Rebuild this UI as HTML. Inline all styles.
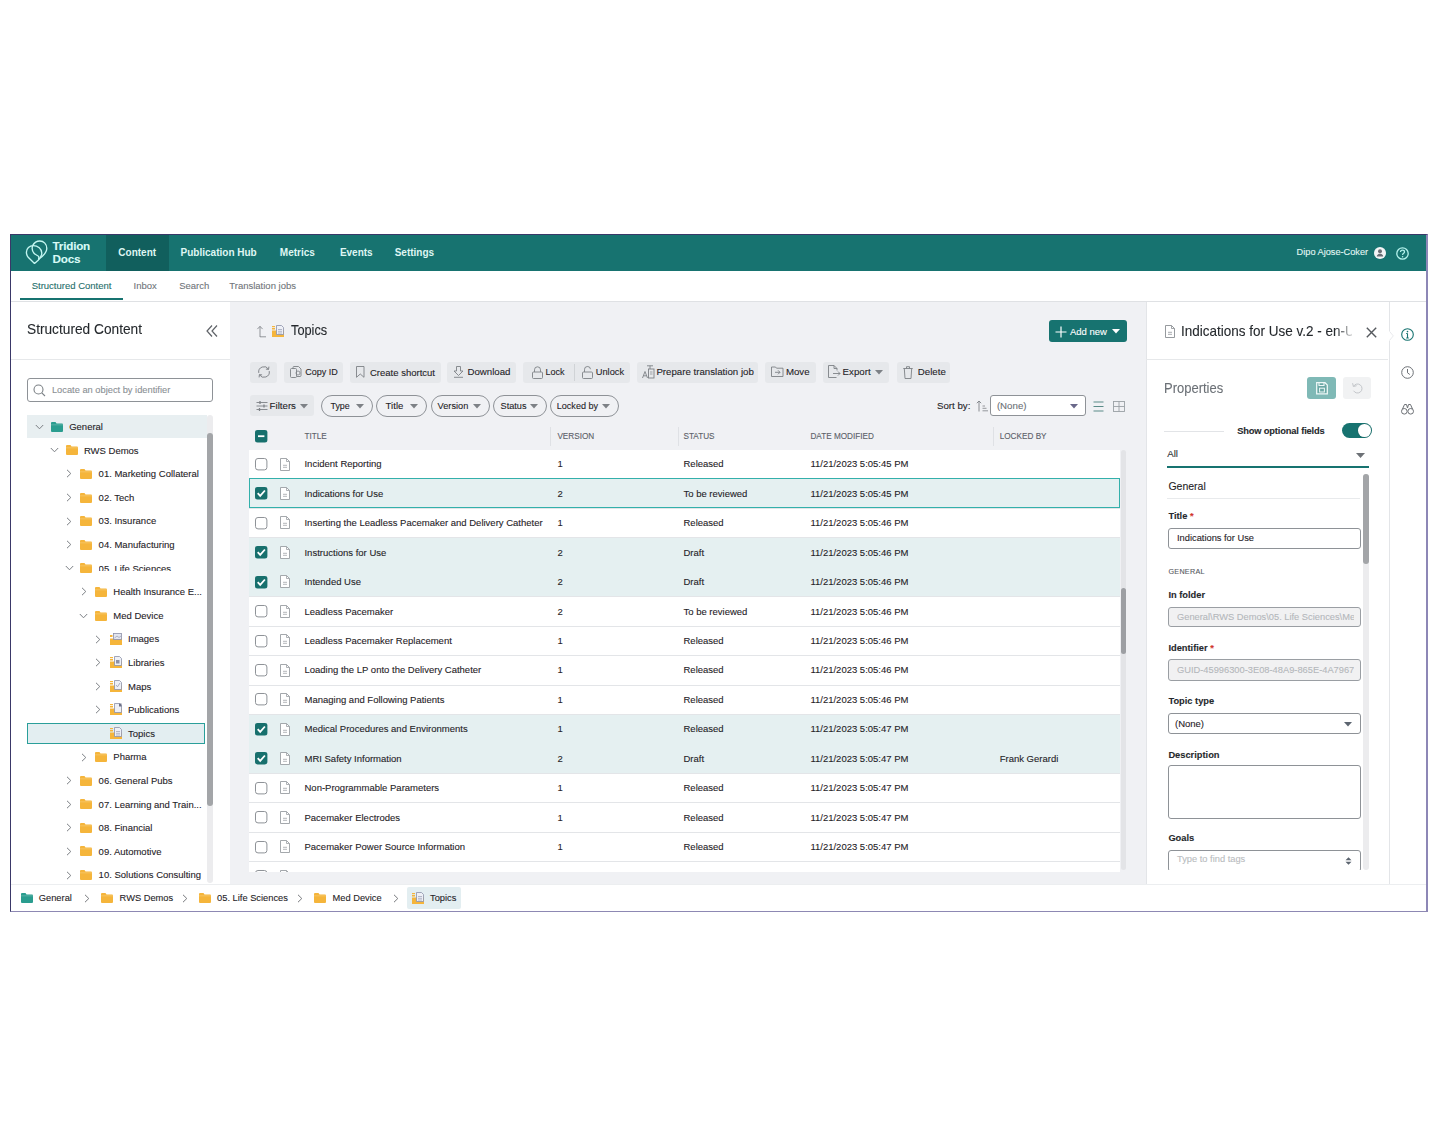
<!DOCTYPE html>
<html><head><meta charset="utf-8"><title>Tridion Docs</title>
<style>
html,body{margin:0;padding:0;background:#fff;}
body{width:1438px;height:1146px;position:relative;overflow:hidden;font-family:"Liberation Sans", sans-serif;}
.t{position:absolute;white-space:nowrap;font-family:"Liberation Sans", sans-serif;-webkit-text-stroke:0.1px currentColor;}
.nav{-webkit-text-stroke:0.35px currentColor;}
svg{display:block;overflow:visible}
</style></head><body>
<div style="position:absolute;left:10.00px;top:234.00px;width:1418.00px;height:677.50px;background:#fff"></div><div style="position:absolute;left:10.50px;top:234.50px;width:1417.00px;height:36.00px;background:#177370"></div><div style="position:absolute;left:106.00px;top:234.50px;width:63.00px;height:36.00px;background:#115f5d"></div><svg style="position:absolute;left:24.00px;top:238.00px;" width="26" height="28" viewBox="0 0 26 28"><g fill="none" stroke="#c4f6f1" stroke-width="1.35" stroke-linejoin="round">
<path d="M8.6 7.6 C10.2 4.6 12.8 3 15.8 3 C19.8 3 22.8 6.3 22.8 10.3 C22.8 14.5 18.5 18.6 14.6 21.2"/>
<path d="M10.5 25.4 L4.2 19.2 C2.8 17.6 2.4 15.8 2.4 14.2 C2.4 10.3 5.5 7.6 9.3 7.6 C13.8 7.6 17.8 10.8 17.8 15 C17.8 18.6 16.2 20.2 14.2 22.2 Z"/>
<path d="M8.6 7.8 C7.8 10.4 8.2 13.2 10 15.2 C11.5 16.8 13.6 17.4 14.6 18.4 C15 19.2 14.8 20.6 14.5 21.6"/>
</g></svg><div class="t" style="left:52.50px;top:239.18px;font-size:11.7px;line-height:14.04px;color:#d9fbf7;font-weight:700;letter-spacing:-0.2px">Tridion</div><div class="t" style="left:52.50px;top:251.78px;font-size:11.7px;line-height:14.04px;color:#d9fbf7;font-weight:700;letter-spacing:-0.2px">Docs</div><div class="t" style="left:118.30px;top:246.60px;font-size:10px;line-height:12.00px;color:#dff6f3;font-weight:700;-webkit-text-stroke:0px">Content</div><div class="t" style="left:180.60px;top:246.60px;font-size:10px;line-height:12.00px;color:#dff6f3;font-weight:700;-webkit-text-stroke:0px">Publication Hub</div><div class="t" style="left:279.80px;top:246.60px;font-size:10px;line-height:12.00px;color:#dff6f3;font-weight:700;-webkit-text-stroke:0px">Metrics</div><div class="t" style="left:339.90px;top:246.60px;font-size:10px;line-height:12.00px;color:#dff6f3;font-weight:700;-webkit-text-stroke:0px">Events</div><div class="t" style="left:394.70px;top:246.60px;font-size:10px;line-height:12.00px;color:#dff6f3;font-weight:700;-webkit-text-stroke:0px">Settings</div><div class="t" style="left:1296.60px;top:247.48px;font-size:9.2px;line-height:11.04px;color:#e4f7f5;font-weight:400;">Dipo Ajose-Coker</div><svg style="position:absolute;left:1373.50px;top:247.00px;" width="12" height="12" viewBox="0 0 12 12"><circle cx="6" cy="6" r="6" fill="#f4f4f6"/><circle cx="6" cy="4.3" r="2" fill="#6b6e75"/><path d="M2.8 9.6 C3 7.4 4.5 6.8 6 6.8 C7.5 6.8 9 7.4 9.2 9.6 Z" fill="#6b6e75"/></svg><svg style="position:absolute;left:1396.20px;top:246.60px;" width="13" height="13" viewBox="0 0 13 13"><circle cx="6.5" cy="6.5" r="5.7" fill="none" stroke="#b3f1eb" stroke-width="1.3"/><path d="M4.5 5.1 C4.5 3.8 5.4 3.1 6.5 3.1 C7.7 3.1 8.5 3.9 8.5 4.9 C8.5 6.3 6.6 6.3 6.6 7.9" fill="none" stroke="#b3f1eb" stroke-width="1.25"/><circle cx="6.6" cy="9.8" r="0.8" fill="#b3f1eb"/></svg><div style="position:absolute;left:10.50px;top:270.50px;width:1417.00px;height:31.00px;background:#fff"></div><div style="position:absolute;left:10.50px;top:301.00px;width:1417.00px;height:1.00px;background:#dfe1e4"></div><div style="position:absolute;left:20.00px;top:297.60px;width:102.50px;height:2.60px;background:#177370"></div><div class="t" style="left:31.70px;top:280.10px;font-size:9.5px;line-height:11.40px;color:#1f6f6b;font-weight:400;">Structured Content</div><div class="t" style="left:133.50px;top:280.10px;font-size:9.5px;line-height:11.40px;color:#70757a;font-weight:400;">Inbox</div><div class="t" style="left:179.20px;top:280.10px;font-size:9.5px;line-height:11.40px;color:#70757a;font-weight:400;">Search</div><div class="t" style="left:229.30px;top:280.10px;font-size:9.5px;line-height:11.40px;color:#70757a;font-weight:400;">Translation jobs</div><div style="position:absolute;left:10.50px;top:302.00px;width:219.50px;height:582.00px;background:#fff"></div><div class="t" style="left:26.80px;top:321.26px;font-size:14.9px;line-height:17.88px;color:#25292d;font-weight:400;transform:scaleX(0.92);transform-origin:0 50%;">Structured Content</div><svg style="position:absolute;left:205.00px;top:324.00px;" width="14" height="14" viewBox="0 0 14 14"><path d="M7 1.5 L2 7 L7 12.5 M12 1.5 L7 7 L12 12.5" fill="none" stroke="#5f6368" stroke-width="1.2"/></svg><div style="position:absolute;left:10.50px;top:359.00px;width:219.50px;height:1.00px;background:#e6e8ea"></div><div style="position:absolute;left:26.50px;top:378.40px;width:186.50px;height:24.00px;box-sizing:border-box;border:1px solid #8e9297;border-radius:3px;background:#fff"></div><svg style="position:absolute;left:32.50px;top:384.00px;" width="13" height="13" viewBox="0 0 13 13"><circle cx="5.5" cy="5.5" r="4.5" fill="none" stroke="#7b8085" stroke-width="1.1"/><path d="M8.8 8.8 L12 12" stroke="#7b8085" stroke-width="1.1"/></svg><div class="t" style="left:51.90px;top:384.82px;font-size:9.3px;line-height:11.16px;color:#8a8f94;font-weight:400;">Locate an object by identifier</div><div style="position:absolute;left:26.50px;top:415.20px;width:180.00px;height:22.60px;background:#e8eff1"></div><div style="position:absolute;left:27.20px;top:722.90px;width:177.80px;height:21.40px;box-sizing:border-box;border:1.5px solid #2a9f9a;background:#e3eef1"></div><svg style="position:absolute;left:35.20px;top:423.80px;" width="9" height="6" viewBox="0 0 9 6"><path d="M0.8 1 L4.5 4.8 L8.2 1" fill="none" stroke="#7b7f84" stroke-width="1"/></svg><svg style="position:absolute;left:51.00px;top:421.80px;" width="12" height="10" viewBox="0 0 12 10"><path d="M0 1 Q0 0 1 0 L4.5 0 L5.5 1.5 L11 1.5 Q12 1.5 12 2.5 L12 9 Q12 10 11 10 L1 10 Q0 10 0 9 Z" fill="#2a9d8f"/><rect x="0" y="2.6" width="12" height="0.6" fill="#fff" opacity="0.35"/></svg><div class="t" style="left:69.20px;top:421.10px;font-size:9.5px;line-height:11.40px;color:#1f2327;font-weight:400;">General</div><svg style="position:absolute;left:49.90px;top:447.39px;" width="9" height="6" viewBox="0 0 9 6"><path d="M0.8 1 L4.5 4.8 L8.2 1" fill="none" stroke="#7b7f84" stroke-width="1"/></svg><svg style="position:absolute;left:65.70px;top:445.39px;" width="12" height="10" viewBox="0 0 12 10"><path d="M0 1 Q0 0 1 0 L4.5 0 L5.5 1.5 L11 1.5 Q12 1.5 12 2.5 L12 9 Q12 10 11 10 L1 10 Q0 10 0 9 Z" fill="#f5b53b"/><rect x="0" y="2.6" width="12" height="0.6" fill="#fff" opacity="0.35"/></svg><div class="t" style="left:83.90px;top:444.69px;font-size:9.5px;line-height:11.40px;color:#1f2327;font-weight:400;">RWS Demos</div><svg style="position:absolute;left:65.90px;top:469.48px;" width="6" height="9" viewBox="0 0 6 9"><path d="M1 0.8 L4.8 4.5 L1 8.2" fill="none" stroke="#7b7f84" stroke-width="1"/></svg><svg style="position:absolute;left:80.40px;top:468.98px;" width="12" height="10" viewBox="0 0 12 10"><path d="M0 1 Q0 0 1 0 L4.5 0 L5.5 1.5 L11 1.5 Q12 1.5 12 2.5 L12 9 Q12 10 11 10 L1 10 Q0 10 0 9 Z" fill="#f5b53b"/><rect x="0" y="2.6" width="12" height="0.6" fill="#fff" opacity="0.35"/></svg><div class="t" style="left:98.60px;top:468.28px;font-size:9.5px;line-height:11.40px;color:#1f2327;font-weight:400;">01. Marketing Collateral</div><svg style="position:absolute;left:65.90px;top:493.07px;" width="6" height="9" viewBox="0 0 6 9"><path d="M1 0.8 L4.8 4.5 L1 8.2" fill="none" stroke="#7b7f84" stroke-width="1"/></svg><svg style="position:absolute;left:80.40px;top:492.57px;" width="12" height="10" viewBox="0 0 12 10"><path d="M0 1 Q0 0 1 0 L4.5 0 L5.5 1.5 L11 1.5 Q12 1.5 12 2.5 L12 9 Q12 10 11 10 L1 10 Q0 10 0 9 Z" fill="#f5b53b"/><rect x="0" y="2.6" width="12" height="0.6" fill="#fff" opacity="0.35"/></svg><div class="t" style="left:98.60px;top:491.87px;font-size:9.5px;line-height:11.40px;color:#1f2327;font-weight:400;">02. Tech</div><svg style="position:absolute;left:65.90px;top:516.66px;" width="6" height="9" viewBox="0 0 6 9"><path d="M1 0.8 L4.8 4.5 L1 8.2" fill="none" stroke="#7b7f84" stroke-width="1"/></svg><svg style="position:absolute;left:80.40px;top:516.16px;" width="12" height="10" viewBox="0 0 12 10"><path d="M0 1 Q0 0 1 0 L4.5 0 L5.5 1.5 L11 1.5 Q12 1.5 12 2.5 L12 9 Q12 10 11 10 L1 10 Q0 10 0 9 Z" fill="#f5b53b"/><rect x="0" y="2.6" width="12" height="0.6" fill="#fff" opacity="0.35"/></svg><div class="t" style="left:98.60px;top:515.46px;font-size:9.5px;line-height:11.40px;color:#1f2327;font-weight:400;">03. Insurance</div><svg style="position:absolute;left:65.90px;top:540.25px;" width="6" height="9" viewBox="0 0 6 9"><path d="M1 0.8 L4.8 4.5 L1 8.2" fill="none" stroke="#7b7f84" stroke-width="1"/></svg><svg style="position:absolute;left:80.40px;top:539.75px;" width="12" height="10" viewBox="0 0 12 10"><path d="M0 1 Q0 0 1 0 L4.5 0 L5.5 1.5 L11 1.5 Q12 1.5 12 2.5 L12 9 Q12 10 11 10 L1 10 Q0 10 0 9 Z" fill="#f5b53b"/><rect x="0" y="2.6" width="12" height="0.6" fill="#fff" opacity="0.35"/></svg><div class="t" style="left:98.60px;top:539.05px;font-size:9.5px;line-height:11.40px;color:#1f2327;font-weight:400;">04. Manufacturing</div><svg style="position:absolute;left:64.60px;top:565.34px;" width="9" height="6" viewBox="0 0 9 6"><path d="M0.8 1 L4.5 4.8 L8.2 1" fill="none" stroke="#7b7f84" stroke-width="1"/></svg><svg style="position:absolute;left:80.40px;top:563.34px;" width="12" height="10" viewBox="0 0 12 10"><path d="M0 1 Q0 0 1 0 L4.5 0 L5.5 1.5 L11 1.5 Q12 1.5 12 2.5 L12 9 Q12 10 11 10 L1 10 Q0 10 0 9 Z" fill="#f5b53b"/><rect x="0" y="2.6" width="12" height="0.6" fill="#fff" opacity="0.35"/></svg><div style="position:absolute;left:98.60px;top:561.8px;width:120px;height:8.9px;overflow:hidden"><div class="t" style="left:0;top:0;font-size:9.5px;line-height:14px;color:#1f2327">05. Life Sciences</div></div><svg style="position:absolute;left:80.60px;top:587.43px;" width="6" height="9" viewBox="0 0 6 9"><path d="M1 0.8 L4.8 4.5 L1 8.2" fill="none" stroke="#7b7f84" stroke-width="1"/></svg><svg style="position:absolute;left:95.10px;top:586.93px;" width="12" height="10" viewBox="0 0 12 10"><path d="M0 1 Q0 0 1 0 L4.5 0 L5.5 1.5 L11 1.5 Q12 1.5 12 2.5 L12 9 Q12 10 11 10 L1 10 Q0 10 0 9 Z" fill="#f5b53b"/><rect x="0" y="2.6" width="12" height="0.6" fill="#fff" opacity="0.35"/></svg><div class="t" style="left:113.30px;top:586.23px;font-size:9.5px;line-height:11.40px;color:#1f2327;font-weight:400;">Health Insurance E...</div><svg style="position:absolute;left:79.30px;top:612.52px;" width="9" height="6" viewBox="0 0 9 6"><path d="M0.8 1 L4.5 4.8 L8.2 1" fill="none" stroke="#7b7f84" stroke-width="1"/></svg><svg style="position:absolute;left:95.10px;top:610.52px;" width="12" height="10" viewBox="0 0 12 10"><path d="M0 1 Q0 0 1 0 L4.5 0 L5.5 1.5 L11 1.5 Q12 1.5 12 2.5 L12 9 Q12 10 11 10 L1 10 Q0 10 0 9 Z" fill="#f5b53b"/><rect x="0" y="2.6" width="12" height="0.6" fill="#fff" opacity="0.35"/></svg><div class="t" style="left:113.30px;top:609.82px;font-size:9.5px;line-height:11.40px;color:#1f2327;font-weight:400;">Med Device</div><svg style="position:absolute;left:95.30px;top:634.61px;" width="6" height="9" viewBox="0 0 6 9"><path d="M1 0.8 L4.8 4.5 L1 8.2" fill="none" stroke="#7b7f84" stroke-width="1"/></svg><svg style="position:absolute;left:109.80px;top:632.61px;" width="12" height="12.5" viewBox="0 0 12 12.5"><path d="M0 5.5 L12 5.5 L12 12 L0 12 Z M0 2 L2.5 2 L2.5 4 L0 4Z" fill="#f5b53b"/><rect x="3.5" y="0.5" width="8" height="6" fill="#e3e6f0" stroke="#8c90a8" stroke-width="0.8"/><path d="M4.5 5 L7 3 L9 4.5 L11 3" fill="none" stroke="#8c90a8" stroke-width="0.6"/></svg><div class="t" style="left:128.00px;top:633.41px;font-size:9.5px;line-height:11.40px;color:#1f2327;font-weight:400;">Images</div><svg style="position:absolute;left:95.30px;top:658.20px;" width="6" height="9" viewBox="0 0 6 9"><path d="M1 0.8 L4.8 4.5 L1 8.2" fill="none" stroke="#7b7f84" stroke-width="1"/></svg><svg style="position:absolute;left:109.80px;top:656.20px;" width="12" height="12.5" viewBox="0 0 12 12.5"><path d="M0 3 L3 3 L3 4.5 L0 4.5 Z M0 5.5 L12 5.5 L12 12 L0 12 Z" fill="#f5b53b"/><path d="M0 1 L3 1 L3 2.2 L0 2.2Z" fill="#f5b53b"/><path d="M4.5 0.5 L9.5 0.5 L11.5 2.5 L11.5 9.5 L4.5 9.5 Z" fill="#eef0f6" stroke="#8c90a8" stroke-width="0.8"/><rect x="6" y="4" width="3.5" height="3.5" fill="#8c90a8"/></svg><div class="t" style="left:128.00px;top:657.00px;font-size:9.5px;line-height:11.40px;color:#1f2327;font-weight:400;">Libraries</div><svg style="position:absolute;left:95.30px;top:681.79px;" width="6" height="9" viewBox="0 0 6 9"><path d="M1 0.8 L4.8 4.5 L1 8.2" fill="none" stroke="#7b7f84" stroke-width="1"/></svg><svg style="position:absolute;left:109.80px;top:679.79px;" width="12" height="12.5" viewBox="0 0 12 12.5"><path d="M0 3 L3 3 L3 4.5 L0 4.5 Z M0 5.5 L12 5.5 L12 12 L0 12 Z" fill="#f5b53b"/><path d="M0 1 L3 1 L3 2.2 L0 2.2Z" fill="#f5b53b"/><path d="M4.5 0.5 L9.5 0.5 L11.5 2.5 L11.5 9.5 L4.5 9.5 Z" fill="#eef0f6" stroke="#8c90a8" stroke-width="0.8"/><path d="M6 5 L7.5 6.8 L10 3" fill="none" stroke="#8c90a8" stroke-width="0.7"/></svg><div class="t" style="left:128.00px;top:680.59px;font-size:9.5px;line-height:11.40px;color:#1f2327;font-weight:400;">Maps</div><svg style="position:absolute;left:95.30px;top:705.38px;" width="6" height="9" viewBox="0 0 6 9"><path d="M1 0.8 L4.8 4.5 L1 8.2" fill="none" stroke="#7b7f84" stroke-width="1"/></svg><svg style="position:absolute;left:109.80px;top:703.38px;" width="12" height="12.5" viewBox="0 0 12 12.5"><path d="M0 3 L3 3 L3 4.5 L0 4.5 Z M0 5.5 L12 5.5 L12 12 L0 12 Z" fill="#f5b53b"/><path d="M0 1 L3 1 L3 2.2 L0 2.2Z" fill="#f5b53b"/><path d="M4.5 0.5 L9.5 0.5 L11.5 2.5 L11.5 9.5 L4.5 9.5 Z" fill="#eef0f6" stroke="#8c90a8" stroke-width="0.8"/><rect x="9" y="0.5" width="2.5" height="3" fill="#6c7088"/></svg><div class="t" style="left:128.00px;top:704.18px;font-size:9.5px;line-height:11.40px;color:#1f2327;font-weight:400;">Publications</div><svg style="position:absolute;left:109.80px;top:726.97px;" width="12" height="12.5" viewBox="0 0 12 12.5"><path d="M0 3 L3 3 L3 4.5 L0 4.5 Z M0 5.5 L12 5.5 L12 12 L0 12 Z" fill="#f5b53b"/><path d="M0 1 L3 1 L3 2.2 L0 2.2Z" fill="#f5b53b"/><path d="M4.5 0.5 L9.5 0.5 L11.5 2.5 L11.5 9.5 L4.5 9.5 Z" fill="#eef0f6" stroke="#8c90a8" stroke-width="0.8"/><path d="M6 4.5 H10 M6 6.3 H10 M6 8 H10" stroke="#8c90a8" stroke-width="0.6"/></svg><div class="t" style="left:128.00px;top:727.77px;font-size:9.5px;line-height:11.40px;color:#1f2327;font-weight:400;">Topics</div><svg style="position:absolute;left:80.60px;top:752.56px;" width="6" height="9" viewBox="0 0 6 9"><path d="M1 0.8 L4.8 4.5 L1 8.2" fill="none" stroke="#7b7f84" stroke-width="1"/></svg><svg style="position:absolute;left:95.10px;top:752.06px;" width="12" height="10" viewBox="0 0 12 10"><path d="M0 1 Q0 0 1 0 L4.5 0 L5.5 1.5 L11 1.5 Q12 1.5 12 2.5 L12 9 Q12 10 11 10 L1 10 Q0 10 0 9 Z" fill="#f5b53b"/><rect x="0" y="2.6" width="12" height="0.6" fill="#fff" opacity="0.35"/></svg><div class="t" style="left:113.30px;top:751.36px;font-size:9.5px;line-height:11.40px;color:#1f2327;font-weight:400;">Pharma</div><svg style="position:absolute;left:65.90px;top:776.15px;" width="6" height="9" viewBox="0 0 6 9"><path d="M1 0.8 L4.8 4.5 L1 8.2" fill="none" stroke="#7b7f84" stroke-width="1"/></svg><svg style="position:absolute;left:80.40px;top:775.65px;" width="12" height="10" viewBox="0 0 12 10"><path d="M0 1 Q0 0 1 0 L4.5 0 L5.5 1.5 L11 1.5 Q12 1.5 12 2.5 L12 9 Q12 10 11 10 L1 10 Q0 10 0 9 Z" fill="#f5b53b"/><rect x="0" y="2.6" width="12" height="0.6" fill="#fff" opacity="0.35"/></svg><div class="t" style="left:98.60px;top:774.95px;font-size:9.5px;line-height:11.40px;color:#1f2327;font-weight:400;">06. General Pubs</div><svg style="position:absolute;left:65.90px;top:799.74px;" width="6" height="9" viewBox="0 0 6 9"><path d="M1 0.8 L4.8 4.5 L1 8.2" fill="none" stroke="#7b7f84" stroke-width="1"/></svg><svg style="position:absolute;left:80.40px;top:799.24px;" width="12" height="10" viewBox="0 0 12 10"><path d="M0 1 Q0 0 1 0 L4.5 0 L5.5 1.5 L11 1.5 Q12 1.5 12 2.5 L12 9 Q12 10 11 10 L1 10 Q0 10 0 9 Z" fill="#f5b53b"/><rect x="0" y="2.6" width="12" height="0.6" fill="#fff" opacity="0.35"/></svg><div class="t" style="left:98.60px;top:798.54px;font-size:9.5px;line-height:11.40px;color:#1f2327;font-weight:400;">07. Learning and Train...</div><svg style="position:absolute;left:65.90px;top:823.33px;" width="6" height="9" viewBox="0 0 6 9"><path d="M1 0.8 L4.8 4.5 L1 8.2" fill="none" stroke="#7b7f84" stroke-width="1"/></svg><svg style="position:absolute;left:80.40px;top:822.83px;" width="12" height="10" viewBox="0 0 12 10"><path d="M0 1 Q0 0 1 0 L4.5 0 L5.5 1.5 L11 1.5 Q12 1.5 12 2.5 L12 9 Q12 10 11 10 L1 10 Q0 10 0 9 Z" fill="#f5b53b"/><rect x="0" y="2.6" width="12" height="0.6" fill="#fff" opacity="0.35"/></svg><div class="t" style="left:98.60px;top:822.13px;font-size:9.5px;line-height:11.40px;color:#1f2327;font-weight:400;">08. Financial</div><svg style="position:absolute;left:65.90px;top:846.92px;" width="6" height="9" viewBox="0 0 6 9"><path d="M1 0.8 L4.8 4.5 L1 8.2" fill="none" stroke="#7b7f84" stroke-width="1"/></svg><svg style="position:absolute;left:80.40px;top:846.42px;" width="12" height="10" viewBox="0 0 12 10"><path d="M0 1 Q0 0 1 0 L4.5 0 L5.5 1.5 L11 1.5 Q12 1.5 12 2.5 L12 9 Q12 10 11 10 L1 10 Q0 10 0 9 Z" fill="#f5b53b"/><rect x="0" y="2.6" width="12" height="0.6" fill="#fff" opacity="0.35"/></svg><div class="t" style="left:98.60px;top:845.72px;font-size:9.5px;line-height:11.40px;color:#1f2327;font-weight:400;">09. Automotive</div><svg style="position:absolute;left:65.90px;top:870.51px;" width="6" height="9" viewBox="0 0 6 9"><path d="M1 0.8 L4.8 4.5 L1 8.2" fill="none" stroke="#7b7f84" stroke-width="1"/></svg><svg style="position:absolute;left:80.40px;top:870.01px;" width="12" height="10" viewBox="0 0 12 10"><path d="M0 1 Q0 0 1 0 L4.5 0 L5.5 1.5 L11 1.5 Q12 1.5 12 2.5 L12 9 Q12 10 11 10 L1 10 Q0 10 0 9 Z" fill="#f5b53b"/><rect x="0" y="2.6" width="12" height="0.6" fill="#fff" opacity="0.35"/></svg><div class="t" style="left:98.60px;top:869.31px;font-size:9.5px;line-height:11.40px;color:#1f2327;font-weight:400;">10. Solutions Consulting</div><div style="position:absolute;left:206.50px;top:415.00px;width:6.50px;height:468.00px;background:#ececee;border-radius:3px"></div><div style="position:absolute;left:206.50px;top:432.80px;width:6.50px;height:373.00px;background:#a3a5a8;border-radius:3px"></div><div style="position:absolute;left:230.00px;top:302.00px;width:915.50px;height:582.00px;background:#f0f1f4"></div><svg style="position:absolute;left:255.50px;top:325.00px;" width="12" height="13" viewBox="0 0 12 13"><path d="M4 12 L4 1.5 M1.4 4.1 L4 1.3 L6.6 4.1 M4 11.8 L10 11.8" fill="none" stroke="#7a7e83" stroke-width="0.8"/></svg><svg style="position:absolute;left:272.30px;top:325.10px;" width="12" height="12.5" viewBox="0 0 12 12.5"><path d="M0 3 L3 3 L3 4.5 L0 4.5 Z M0 5.5 L12 5.5 L12 12 L0 12 Z" fill="#f5b53b"/><path d="M0 1 L3 1 L3 2.2 L0 2.2Z" fill="#f5b53b"/><path d="M4.5 0.5 L9.5 0.5 L11.5 2.5 L11.5 9.5 L4.5 9.5 Z" fill="#eef0f6" stroke="#8c90a8" stroke-width="0.8"/><path d="M6 4.5 H10 M6 6.3 H10 M6 8 H10" stroke="#8c90a8" stroke-width="0.6"/></svg><div class="t" style="left:290.90px;top:322.28px;font-size:14.2px;line-height:17.04px;color:#25292d;font-weight:400;transform:scaleX(0.9);transform-origin:0 50%;">Topics</div><div style="position:absolute;left:1049.00px;top:320.40px;width:78.40px;height:22.00px;background:#177370;border-radius:3px"></div><svg style="position:absolute;left:1055.00px;top:325.50px;" width="12" height="12" viewBox="0 0 12 12"><path d="M6 0.5 V11.5 M0.5 6 H11.5" stroke="#fff" stroke-width="1.2"/></svg><div class="t" style="left:1070.00px;top:326.00px;font-size:9.5px;line-height:11.40px;color:#ffffff;font-weight:400;">Add new</div><svg style="position:absolute;left:1112.00px;top:329.00px;" width="8" height="5" viewBox="0 0 8 5"><path d="M0 0 H8 L4 4.5 Z" fill="#fff"/></svg><div style="position:absolute;left:250.10px;top:361.70px;width:27.30px;height:21.00px;background:#e6e8eb;border-radius:3px"></div><svg style="position:absolute;left:257.80px;top:365.80px;" width="12.5" height="12.5" viewBox="0 0 12.5 12.5"><path d="M0.78 6.92 A5.3 5.3 0 0 1 10.59 3.35 M11.22 5.08 A5.3 5.3 0 0 1 1.41 8.65" fill="none" stroke="#7d8186" stroke-width="0.95"/><path d="M10.9 0.6 L10.59 3.35 L7.9 3.1 M1.1 11.4 L1.41 8.65 L4.1 8.9" fill="none" stroke="#7d8186" stroke-width="0.95"/></svg><div style="position:absolute;left:284.40px;top:361.70px;width:58.80px;height:21.00px;background:#e6e8eb;border-radius:3px"></div><svg style="position:absolute;left:290.00px;top:366.00px;" width="12" height="12" viewBox="0 0 12 12"><rect x="0.5" y="2.5" width="6" height="9" rx="1" fill="none" stroke="#7d8186" stroke-width="0.9"/><path d="M3 2.5 V1.5 Q3 0.5 4 0.5 H8.5 L11 3 V9.5 Q11 10.5 10 10.5 H7" fill="none" stroke="#7d8186" stroke-width="0.9"/><circle cx="8" cy="7" r="2" fill="none" stroke="#7d8186" stroke-width="0.8"/></svg><div class="t" style="left:305.20px;top:366.80px;font-size:9.0px;line-height:10.80px;color:#1f2327;font-weight:400;">Copy ID</div><div style="position:absolute;left:350.00px;top:361.70px;width:90.50px;height:21.00px;background:#e6e8eb;border-radius:3px"></div><svg style="position:absolute;left:356.00px;top:366.00px;" width="9" height="12" viewBox="0 0 9 12"><path d="M0.5 0.5 H8 V11.3 L4.25 8 L0.5 11.3 Z" fill="none" stroke="#7d8186" stroke-width="0.9"/></svg><div class="t" style="left:370.00px;top:366.50px;font-size:9.5px;line-height:11.40px;color:#1f2327;font-weight:400;">Create shortcut</div><div style="position:absolute;left:447.40px;top:361.70px;width:68.70px;height:21.00px;background:#e6e8eb;border-radius:3px"></div><svg style="position:absolute;left:452.50px;top:366.00px;" width="11" height="12" viewBox="0 0 11 12"><path d="M3.5 0.5 H7.5 V5 H10 L5.5 9.5 L1 5 H3.5 Z" fill="none" stroke="#7d8186" stroke-width="0.9"/><path d="M1 11.3 H10" stroke="#7d8186" stroke-width="0.9"/></svg><div class="t" style="left:467.40px;top:366.38px;font-size:9.7px;line-height:11.64px;color:#1f2327;font-weight:400;">Download</div><div style="position:absolute;left:522.70px;top:361.70px;width:107.00px;height:21.00px;background:#e6e8eb;border-radius:3px"></div><div style="position:absolute;left:574.00px;top:364.00px;width:0.80px;height:17.00px;background:#d0d3d6"></div><svg style="position:absolute;left:531.50px;top:365.50px;" width="11" height="13" viewBox="0 0 11 13"><path d="M2.5 6 V3.8 A3 3 0 0 1 8.5 3.8 V6" fill="none" stroke="#7d8186" stroke-width="0.9"/><rect x="0.5" y="6" width="10" height="6.5" rx="1" fill="none" stroke="#7d8186" stroke-width="0.9"/></svg><div class="t" style="left:545.60px;top:366.80px;font-size:9.0px;line-height:10.80px;color:#1f2327;font-weight:400;">Lock</div><svg style="position:absolute;left:581.50px;top:365.50px;" width="11" height="13" viewBox="0 0 11 13"><path d="M2.5 6 V3.8 A3 3 0 0 1 8.5 3.2" fill="none" stroke="#7d8186" stroke-width="0.9"/><rect x="0.5" y="6" width="10" height="6.5" rx="1" fill="none" stroke="#7d8186" stroke-width="0.9"/></svg><div class="t" style="left:595.70px;top:366.62px;font-size:9.3px;line-height:11.16px;color:#1f2327;font-weight:400;">Unlock</div><div style="position:absolute;left:636.60px;top:361.70px;width:121.60px;height:21.00px;background:#e6e8eb;border-radius:3px"></div><svg style="position:absolute;left:641.50px;top:364.50px;" width="13" height="14" viewBox="0 0 13 14"><path d="M5 0.8 H11 M8 0.8 V4" stroke="#7d8186" stroke-width="0.9"/><rect x="6.5" y="4" width="5.5" height="9" fill="none" stroke="#7d8186" stroke-width="0.9"/><path d="M0.5 13 L3 6.5 L5.5 13 M1.5 10.8 H4.5" fill="none" stroke="#7d8186" stroke-width="0.9"/><path d="M8 7 H10.5 M8 9 H10.5" stroke="#7d8186" stroke-width="0.7"/></svg><div class="t" style="left:656.40px;top:366.38px;font-size:9.7px;line-height:11.64px;color:#1f2327;font-weight:400;">Prepare translation job</div><div style="position:absolute;left:764.70px;top:361.70px;width:51.30px;height:21.00px;background:#e6e8eb;border-radius:3px"></div><svg style="position:absolute;left:770.50px;top:366.00px;" width="13" height="11" viewBox="0 0 13 11"><path d="M0.5 1 H4.5 L5.5 2.2 H12 V10.5 H0.5 Z" fill="none" stroke="#7d8186" stroke-width="0.9"/><path d="M4 6.3 H9 M7 4.3 L9 6.3 L7 8.3" fill="none" stroke="#7d8186" stroke-width="0.9"/></svg><div class="t" style="left:785.90px;top:366.38px;font-size:9.7px;line-height:11.64px;color:#1f2327;font-weight:400;">Move</div><div style="position:absolute;left:823.00px;top:361.70px;width:66.40px;height:21.00px;background:#e6e8eb;border-radius:3px"></div><svg style="position:absolute;left:827.50px;top:365.00px;" width="13" height="13" viewBox="0 0 13 13"><path d="M8.5 12.5 H0.5 V0.5 H6 L9 3.5 V5.5" fill="none" stroke="#7d8186" stroke-width="0.9"/><path d="M6 0.5 V3.5 H9 M5 8.5 H12 M10 6.5 L12 8.5 L10 10.5" fill="none" stroke="#7d8186" stroke-width="0.9"/></svg><div class="t" style="left:842.60px;top:366.38px;font-size:9.7px;line-height:11.64px;color:#1f2327;font-weight:400;">Export</div><svg style="position:absolute;left:875.00px;top:370.00px;" width="8" height="5" viewBox="0 0 8 5"><path d="M0 0 H8 L4 4.5 Z" fill="#7d8186"/></svg><div style="position:absolute;left:896.90px;top:361.70px;width:53.10px;height:21.00px;background:#e6e8eb;border-radius:3px"></div><svg style="position:absolute;left:902.80px;top:365.50px;" width="10" height="13" viewBox="0 0 10 13"><path d="M0.3 2.5 H9.7 M3.5 2.5 V0.7 H6.5 V2.5" fill="none" stroke="#7d8186" stroke-width="0.9"/><path d="M1.3 2.5 L2 12.5 H8 L8.7 2.5" fill="none" stroke="#7d8186" stroke-width="0.9"/></svg><div class="t" style="left:917.80px;top:366.38px;font-size:9.7px;line-height:11.64px;color:#1f2327;font-weight:400;">Delete</div><div style="position:absolute;left:249.70px;top:395.20px;width:64.70px;height:21.00px;background:#e6e8eb;border-radius:3px"></div><svg style="position:absolute;left:256.00px;top:400.00px;" width="12" height="12" viewBox="0 0 12 12"><path d="M0.5 2.5 H11.5 M0.5 6 H11.5 M0.5 9.5 H11.5" stroke="#7d8186" stroke-width="0.9"/><path d="M4 1 V4 M8 4.5 V7.5 M3.5 8 V11" stroke="#7d8186" stroke-width="1.3"/></svg><div class="t" style="left:269.60px;top:400.38px;font-size:9.7px;line-height:11.64px;color:#1f2327;font-weight:400;">Filters</div><svg style="position:absolute;left:299.50px;top:404.00px;" width="8" height="5" viewBox="0 0 8 5"><path d="M0 0 H8 L4 4.5 Z" fill="#7d8186"/></svg><div style="position:absolute;left:321.40px;top:395.20px;width:51.60px;height:21.40px;box-sizing:border-box;border:1px solid #8e9297;border-radius:11px"></div><div class="t" style="left:330.50px;top:400.86px;font-size:8.9px;line-height:10.68px;color:#1f2327;font-weight:400;">Type</div><svg style="position:absolute;left:356.00px;top:404.00px;" width="8" height="5" viewBox="0 0 8 5"><path d="M0 0 H8 L4 4.5 Z" fill="#7d8186"/></svg><div style="position:absolute;left:376.30px;top:395.20px;width:50.70px;height:21.40px;box-sizing:border-box;border:1px solid #8e9297;border-radius:11px"></div><div class="t" style="left:385.60px;top:400.44px;font-size:9.6px;line-height:11.52px;color:#1f2327;font-weight:400;">Title</div><svg style="position:absolute;left:410.00px;top:404.00px;" width="8" height="5" viewBox="0 0 8 5"><path d="M0 0 H8 L4 4.5 Z" fill="#7d8186"/></svg><div style="position:absolute;left:430.80px;top:395.20px;width:58.80px;height:21.40px;box-sizing:border-box;border:1px solid #8e9297;border-radius:11px"></div><div class="t" style="left:437.60px;top:400.68px;font-size:9.2px;line-height:11.04px;color:#1f2327;font-weight:400;">Version</div><svg style="position:absolute;left:472.60px;top:404.00px;" width="8" height="5" viewBox="0 0 8 5"><path d="M0 0 H8 L4 4.5 Z" fill="#7d8186"/></svg><div style="position:absolute;left:493.00px;top:395.20px;width:53.60px;height:21.40px;box-sizing:border-box;border:1px solid #8e9297;border-radius:11px"></div><div class="t" style="left:500.50px;top:400.68px;font-size:9.2px;line-height:11.04px;color:#1f2327;font-weight:400;">Status</div><svg style="position:absolute;left:529.60px;top:404.00px;" width="8" height="5" viewBox="0 0 8 5"><path d="M0 0 H8 L4 4.5 Z" fill="#7d8186"/></svg><div style="position:absolute;left:550.30px;top:395.20px;width:68.70px;height:21.40px;box-sizing:border-box;border:1px solid #8e9297;border-radius:11px"></div><div class="t" style="left:556.70px;top:400.74px;font-size:9.1px;line-height:10.92px;color:#1f2327;font-weight:400;">Locked by</div><svg style="position:absolute;left:602.00px;top:404.00px;" width="8" height="5" viewBox="0 0 8 5"><path d="M0 0 H8 L4 4.5 Z" fill="#7d8186"/></svg><div class="t" style="left:937.00px;top:400.38px;font-size:9.7px;line-height:11.64px;color:#1f2327;font-weight:400;">Sort by:</div><svg style="position:absolute;left:975.50px;top:400.00px;" width="12" height="12" viewBox="0 0 12 12"><path d="M3 11.5 V1 M0.8 3.2 L3 1 L5.2 3.2" fill="none" stroke="#7d8186" stroke-width="0.9"/><path d="M6.5 6 H9 M6.5 8.3 H10.5 M6.5 10.8 H12" stroke="#7d8186" stroke-width="0.8"/></svg><div style="position:absolute;left:990.40px;top:395.40px;width:95.40px;height:21.00px;box-sizing:border-box;border:1px solid #8e9297;border-radius:3px;background:#fff"></div><div class="t" style="left:996.90px;top:400.38px;font-size:9.7px;line-height:11.64px;color:#6b7075;font-weight:400;">(None)</div><svg style="position:absolute;left:1069.80px;top:404.00px;" width="8" height="5" viewBox="0 0 8 5"><path d="M0 0 H8 L4 4.5 Z" fill="#6a688a"/></svg><svg style="position:absolute;left:1092.50px;top:400.50px;" width="11" height="11" viewBox="0 0 11 11"><path d="M0.5 1 H10.5 M0.5 5.5 H10.5 M0.5 10 H10.5" stroke="#5b8c88" stroke-width="1.1"/></svg><svg style="position:absolute;left:1112.50px;top:400.50px;" width="12" height="11" viewBox="0 0 12 11"><rect x="0.5" y="0.5" width="11" height="10" fill="none" stroke="#9aa0a5" stroke-width="0.9"/><path d="M6 0.5 V10.5 M0.5 5.5 H11.5" stroke="#9aa0a5" stroke-width="0.9"/></svg><svg style="position:absolute;left:255.10px;top:430.00px;" width="12.4" height="12.4" viewBox="0 0 12.4 12.4"><rect x="0" y="0" width="12.4" height="12.4" rx="2.5" fill="#17706d"/><path d="M3 6.2 H9.4" stroke="#fff" stroke-width="1.8"/></svg><div class="t" style="left:304.50px;top:431.78px;font-size:8.2px;line-height:9.84px;color:#5b6068;font-weight:400;">TITLE</div><div class="t" style="left:557.40px;top:431.78px;font-size:8.2px;line-height:9.84px;color:#5b6068;font-weight:400;">VERSION</div><div class="t" style="left:683.50px;top:431.78px;font-size:8.2px;line-height:9.84px;color:#5b6068;font-weight:400;">STATUS</div><div class="t" style="left:810.40px;top:431.78px;font-size:8.2px;line-height:9.84px;color:#5b6068;font-weight:400;">DATE MODIFIED</div><div class="t" style="left:999.70px;top:431.78px;font-size:8.2px;line-height:9.84px;color:#5b6068;font-weight:400;">LOCKED BY</div><div style="position:absolute;left:550.30px;top:427.00px;width:0.80px;height:19.00px;background:#dfe1e5"></div><div style="position:absolute;left:677.50px;top:427.00px;width:0.80px;height:19.00px;background:#dfe1e5"></div><div style="position:absolute;left:993.40px;top:427.00px;width:0.80px;height:19.00px;background:#dfe1e5"></div><div style="position:absolute;left:249.3px;top:449.6px;width:871.20px;height:422.70px;overflow:hidden;background:#fff"><div style="position:absolute;left:0.00px;top:28.95px;width:871.20px;height:1.00px;background:#e3e5e8"></div><svg style="position:absolute;left:5.80px;top:8.22px;" width="12.4" height="12.4" viewBox="0 0 12.4 12.4"><rect x="0.5" y="0.5" width="11.4" height="11.4" rx="2.5" fill="#fff" stroke="#8e9297" stroke-width="1"/></svg><svg style="position:absolute;left:31.00px;top:7.92px;" width="10" height="13" viewBox="0 0 10 13"><path d="M0.5 0.5 H6.5 L9.5 3.5 V12.5 H0.5 Z" fill="#fff" stroke="#9a9ea3" stroke-width="0.9"/><path d="M6.5 0.5 V3.5 H9.5" fill="none" stroke="#9a9ea3" stroke-width="0.8"/><path d="M3 7.3 H7 M3 9.3 H7" stroke="#9a9ea3" stroke-width="0.75"/></svg><div class="t" style="left:55.20px;top:8.72px;font-size:9.5px;line-height:11.40px;color:#1f2327;font-weight:400;">Incident Reporting</div><div class="t" style="left:308.10px;top:8.72px;font-size:9.5px;line-height:11.40px;color:#1f2327;font-weight:400;">1</div><div class="t" style="left:434.20px;top:8.72px;font-size:9.5px;line-height:11.40px;color:#1f2327;font-weight:400;">Released</div><div class="t" style="left:561.10px;top:8.72px;font-size:9.5px;line-height:11.40px;color:#1f2327;font-weight:400;">11/21/2023 5:05:45 PM</div><div style="position:absolute;left:0.00px;top:29.45px;width:871.20px;height:29.45px;background:#e5f0f1"></div><div style="position:absolute;left:0.00px;top:58.40px;width:871.20px;height:1.00px;background:#e3e5e8"></div><div style="position:absolute;left:0.00px;top:28.85px;width:871.20px;height:30.05px;box-sizing:border-box;border:1.2px solid #33b0ab"></div><svg style="position:absolute;left:5.80px;top:37.67px;" width="12.4" height="12.4" viewBox="0 0 12.4 12.4"><rect x="0" y="0" width="12.4" height="12.4" rx="2.5" fill="#17706d"/><path d="M2.7 6.2 L5.2 8.9 L9.9 3.5" fill="none" stroke="#fff" stroke-width="1.8"/></svg><svg style="position:absolute;left:31.00px;top:37.38px;" width="10" height="13" viewBox="0 0 10 13"><path d="M0.5 0.5 H6.5 L9.5 3.5 V12.5 H0.5 Z" fill="#fff" stroke="#9a9ea3" stroke-width="0.9"/><path d="M6.5 0.5 V3.5 H9.5" fill="none" stroke="#9a9ea3" stroke-width="0.8"/><path d="M3 7.3 H7 M3 9.3 H7" stroke="#9a9ea3" stroke-width="0.75"/></svg><div class="t" style="left:55.20px;top:38.17px;font-size:9.5px;line-height:11.40px;color:#1f2327;font-weight:400;">Indications for Use</div><div class="t" style="left:308.10px;top:38.17px;font-size:9.5px;line-height:11.40px;color:#1f2327;font-weight:400;">2</div><div class="t" style="left:434.20px;top:38.17px;font-size:9.5px;line-height:11.40px;color:#1f2327;font-weight:400;">To be reviewed</div><div class="t" style="left:561.10px;top:38.17px;font-size:9.5px;line-height:11.40px;color:#1f2327;font-weight:400;">11/21/2023 5:05:45 PM</div><div style="position:absolute;left:0.00px;top:87.85px;width:871.20px;height:1.00px;background:#e3e5e8"></div><svg style="position:absolute;left:5.80px;top:67.12px;" width="12.4" height="12.4" viewBox="0 0 12.4 12.4"><rect x="0.5" y="0.5" width="11.4" height="11.4" rx="2.5" fill="#fff" stroke="#8e9297" stroke-width="1"/></svg><svg style="position:absolute;left:31.00px;top:66.83px;" width="10" height="13" viewBox="0 0 10 13"><path d="M0.5 0.5 H6.5 L9.5 3.5 V12.5 H0.5 Z" fill="#fff" stroke="#9a9ea3" stroke-width="0.9"/><path d="M6.5 0.5 V3.5 H9.5" fill="none" stroke="#9a9ea3" stroke-width="0.8"/><path d="M3 7.3 H7 M3 9.3 H7" stroke="#9a9ea3" stroke-width="0.75"/></svg><div class="t" style="left:55.20px;top:67.62px;font-size:9.5px;line-height:11.40px;color:#1f2327;font-weight:400;">Inserting the Leadless Pacemaker and Delivery Catheter</div><div class="t" style="left:308.10px;top:67.62px;font-size:9.5px;line-height:11.40px;color:#1f2327;font-weight:400;">1</div><div class="t" style="left:434.20px;top:67.62px;font-size:9.5px;line-height:11.40px;color:#1f2327;font-weight:400;">Released</div><div class="t" style="left:561.10px;top:67.62px;font-size:9.5px;line-height:11.40px;color:#1f2327;font-weight:400;">11/21/2023 5:05:46 PM</div><div style="position:absolute;left:0.00px;top:88.35px;width:871.20px;height:29.45px;background:#e5f0f1"></div><div style="position:absolute;left:0.00px;top:117.30px;width:871.20px;height:1.00px;background:#dde5e8"></div><svg style="position:absolute;left:5.80px;top:96.57px;" width="12.4" height="12.4" viewBox="0 0 12.4 12.4"><rect x="0" y="0" width="12.4" height="12.4" rx="2.5" fill="#17706d"/><path d="M2.7 6.2 L5.2 8.9 L9.9 3.5" fill="none" stroke="#fff" stroke-width="1.8"/></svg><svg style="position:absolute;left:31.00px;top:96.27px;" width="10" height="13" viewBox="0 0 10 13"><path d="M0.5 0.5 H6.5 L9.5 3.5 V12.5 H0.5 Z" fill="#fff" stroke="#9a9ea3" stroke-width="0.9"/><path d="M6.5 0.5 V3.5 H9.5" fill="none" stroke="#9a9ea3" stroke-width="0.8"/><path d="M3 7.3 H7 M3 9.3 H7" stroke="#9a9ea3" stroke-width="0.75"/></svg><div class="t" style="left:55.20px;top:97.07px;font-size:9.5px;line-height:11.40px;color:#1f2327;font-weight:400;">Instructions for Use</div><div class="t" style="left:308.10px;top:97.07px;font-size:9.5px;line-height:11.40px;color:#1f2327;font-weight:400;">2</div><div class="t" style="left:434.20px;top:97.07px;font-size:9.5px;line-height:11.40px;color:#1f2327;font-weight:400;">Draft</div><div class="t" style="left:561.10px;top:97.07px;font-size:9.5px;line-height:11.40px;color:#1f2327;font-weight:400;">11/21/2023 5:05:46 PM</div><div style="position:absolute;left:0.00px;top:117.80px;width:871.20px;height:29.45px;background:#e5f0f1"></div><div style="position:absolute;left:0.00px;top:146.75px;width:871.20px;height:1.00px;background:#e3e5e8"></div><svg style="position:absolute;left:5.80px;top:126.02px;" width="12.4" height="12.4" viewBox="0 0 12.4 12.4"><rect x="0" y="0" width="12.4" height="12.4" rx="2.5" fill="#17706d"/><path d="M2.7 6.2 L5.2 8.9 L9.9 3.5" fill="none" stroke="#fff" stroke-width="1.8"/></svg><svg style="position:absolute;left:31.00px;top:125.72px;" width="10" height="13" viewBox="0 0 10 13"><path d="M0.5 0.5 H6.5 L9.5 3.5 V12.5 H0.5 Z" fill="#fff" stroke="#9a9ea3" stroke-width="0.9"/><path d="M6.5 0.5 V3.5 H9.5" fill="none" stroke="#9a9ea3" stroke-width="0.8"/><path d="M3 7.3 H7 M3 9.3 H7" stroke="#9a9ea3" stroke-width="0.75"/></svg><div class="t" style="left:55.20px;top:126.52px;font-size:9.5px;line-height:11.40px;color:#1f2327;font-weight:400;">Intended Use</div><div class="t" style="left:308.10px;top:126.52px;font-size:9.5px;line-height:11.40px;color:#1f2327;font-weight:400;">2</div><div class="t" style="left:434.20px;top:126.52px;font-size:9.5px;line-height:11.40px;color:#1f2327;font-weight:400;">Draft</div><div class="t" style="left:561.10px;top:126.52px;font-size:9.5px;line-height:11.40px;color:#1f2327;font-weight:400;">11/21/2023 5:05:46 PM</div><div style="position:absolute;left:0.00px;top:176.20px;width:871.20px;height:1.00px;background:#e3e5e8"></div><svg style="position:absolute;left:5.80px;top:155.47px;" width="12.4" height="12.4" viewBox="0 0 12.4 12.4"><rect x="0.5" y="0.5" width="11.4" height="11.4" rx="2.5" fill="#fff" stroke="#8e9297" stroke-width="1"/></svg><svg style="position:absolute;left:31.00px;top:155.17px;" width="10" height="13" viewBox="0 0 10 13"><path d="M0.5 0.5 H6.5 L9.5 3.5 V12.5 H0.5 Z" fill="#fff" stroke="#9a9ea3" stroke-width="0.9"/><path d="M6.5 0.5 V3.5 H9.5" fill="none" stroke="#9a9ea3" stroke-width="0.8"/><path d="M3 7.3 H7 M3 9.3 H7" stroke="#9a9ea3" stroke-width="0.75"/></svg><div class="t" style="left:55.20px;top:155.97px;font-size:9.5px;line-height:11.40px;color:#1f2327;font-weight:400;">Leadless Pacemaker</div><div class="t" style="left:308.10px;top:155.97px;font-size:9.5px;line-height:11.40px;color:#1f2327;font-weight:400;">2</div><div class="t" style="left:434.20px;top:155.97px;font-size:9.5px;line-height:11.40px;color:#1f2327;font-weight:400;">To be reviewed</div><div class="t" style="left:561.10px;top:155.97px;font-size:9.5px;line-height:11.40px;color:#1f2327;font-weight:400;">11/21/2023 5:05:46 PM</div><div style="position:absolute;left:0.00px;top:205.65px;width:871.20px;height:1.00px;background:#e3e5e8"></div><svg style="position:absolute;left:5.80px;top:184.92px;" width="12.4" height="12.4" viewBox="0 0 12.4 12.4"><rect x="0.5" y="0.5" width="11.4" height="11.4" rx="2.5" fill="#fff" stroke="#8e9297" stroke-width="1"/></svg><svg style="position:absolute;left:31.00px;top:184.62px;" width="10" height="13" viewBox="0 0 10 13"><path d="M0.5 0.5 H6.5 L9.5 3.5 V12.5 H0.5 Z" fill="#fff" stroke="#9a9ea3" stroke-width="0.9"/><path d="M6.5 0.5 V3.5 H9.5" fill="none" stroke="#9a9ea3" stroke-width="0.8"/><path d="M3 7.3 H7 M3 9.3 H7" stroke="#9a9ea3" stroke-width="0.75"/></svg><div class="t" style="left:55.20px;top:185.42px;font-size:9.5px;line-height:11.40px;color:#1f2327;font-weight:400;">Leadless Pacemaker Replacement</div><div class="t" style="left:308.10px;top:185.42px;font-size:9.5px;line-height:11.40px;color:#1f2327;font-weight:400;">1</div><div class="t" style="left:434.20px;top:185.42px;font-size:9.5px;line-height:11.40px;color:#1f2327;font-weight:400;">Released</div><div class="t" style="left:561.10px;top:185.42px;font-size:9.5px;line-height:11.40px;color:#1f2327;font-weight:400;">11/21/2023 5:05:46 PM</div><div style="position:absolute;left:0.00px;top:235.10px;width:871.20px;height:1.00px;background:#e3e5e8"></div><svg style="position:absolute;left:5.80px;top:214.38px;" width="12.4" height="12.4" viewBox="0 0 12.4 12.4"><rect x="0.5" y="0.5" width="11.4" height="11.4" rx="2.5" fill="#fff" stroke="#8e9297" stroke-width="1"/></svg><svg style="position:absolute;left:31.00px;top:214.07px;" width="10" height="13" viewBox="0 0 10 13"><path d="M0.5 0.5 H6.5 L9.5 3.5 V12.5 H0.5 Z" fill="#fff" stroke="#9a9ea3" stroke-width="0.9"/><path d="M6.5 0.5 V3.5 H9.5" fill="none" stroke="#9a9ea3" stroke-width="0.8"/><path d="M3 7.3 H7 M3 9.3 H7" stroke="#9a9ea3" stroke-width="0.75"/></svg><div class="t" style="left:55.20px;top:214.88px;font-size:9.5px;line-height:11.40px;color:#1f2327;font-weight:400;">Loading the LP onto the Delivery Catheter</div><div class="t" style="left:308.10px;top:214.88px;font-size:9.5px;line-height:11.40px;color:#1f2327;font-weight:400;">1</div><div class="t" style="left:434.20px;top:214.88px;font-size:9.5px;line-height:11.40px;color:#1f2327;font-weight:400;">Released</div><div class="t" style="left:561.10px;top:214.88px;font-size:9.5px;line-height:11.40px;color:#1f2327;font-weight:400;">11/21/2023 5:05:46 PM</div><div style="position:absolute;left:0.00px;top:264.55px;width:871.20px;height:1.00px;background:#e3e5e8"></div><svg style="position:absolute;left:5.80px;top:243.82px;" width="12.4" height="12.4" viewBox="0 0 12.4 12.4"><rect x="0.5" y="0.5" width="11.4" height="11.4" rx="2.5" fill="#fff" stroke="#8e9297" stroke-width="1"/></svg><svg style="position:absolute;left:31.00px;top:243.52px;" width="10" height="13" viewBox="0 0 10 13"><path d="M0.5 0.5 H6.5 L9.5 3.5 V12.5 H0.5 Z" fill="#fff" stroke="#9a9ea3" stroke-width="0.9"/><path d="M6.5 0.5 V3.5 H9.5" fill="none" stroke="#9a9ea3" stroke-width="0.8"/><path d="M3 7.3 H7 M3 9.3 H7" stroke="#9a9ea3" stroke-width="0.75"/></svg><div class="t" style="left:55.20px;top:244.32px;font-size:9.5px;line-height:11.40px;color:#1f2327;font-weight:400;">Managing and Following Patients</div><div class="t" style="left:308.10px;top:244.32px;font-size:9.5px;line-height:11.40px;color:#1f2327;font-weight:400;">1</div><div class="t" style="left:434.20px;top:244.32px;font-size:9.5px;line-height:11.40px;color:#1f2327;font-weight:400;">Released</div><div class="t" style="left:561.10px;top:244.32px;font-size:9.5px;line-height:11.40px;color:#1f2327;font-weight:400;">11/21/2023 5:05:46 PM</div><div style="position:absolute;left:0.00px;top:265.05px;width:871.20px;height:29.45px;background:#e5f0f1"></div><div style="position:absolute;left:0.00px;top:294.00px;width:871.20px;height:1.00px;background:#dde5e8"></div><svg style="position:absolute;left:5.80px;top:273.28px;" width="12.4" height="12.4" viewBox="0 0 12.4 12.4"><rect x="0" y="0" width="12.4" height="12.4" rx="2.5" fill="#17706d"/><path d="M2.7 6.2 L5.2 8.9 L9.9 3.5" fill="none" stroke="#fff" stroke-width="1.8"/></svg><svg style="position:absolute;left:31.00px;top:272.98px;" width="10" height="13" viewBox="0 0 10 13"><path d="M0.5 0.5 H6.5 L9.5 3.5 V12.5 H0.5 Z" fill="#fff" stroke="#9a9ea3" stroke-width="0.9"/><path d="M6.5 0.5 V3.5 H9.5" fill="none" stroke="#9a9ea3" stroke-width="0.8"/><path d="M3 7.3 H7 M3 9.3 H7" stroke="#9a9ea3" stroke-width="0.75"/></svg><div class="t" style="left:55.20px;top:273.78px;font-size:9.5px;line-height:11.40px;color:#1f2327;font-weight:400;">Medical Procedures and Environments</div><div class="t" style="left:308.10px;top:273.78px;font-size:9.5px;line-height:11.40px;color:#1f2327;font-weight:400;">1</div><div class="t" style="left:434.20px;top:273.78px;font-size:9.5px;line-height:11.40px;color:#1f2327;font-weight:400;">Released</div><div class="t" style="left:561.10px;top:273.78px;font-size:9.5px;line-height:11.40px;color:#1f2327;font-weight:400;">11/21/2023 5:05:47 PM</div><div style="position:absolute;left:0.00px;top:294.50px;width:871.20px;height:29.45px;background:#e5f0f1"></div><div style="position:absolute;left:0.00px;top:323.45px;width:871.20px;height:1.00px;background:#e3e5e8"></div><svg style="position:absolute;left:5.80px;top:302.73px;" width="12.4" height="12.4" viewBox="0 0 12.4 12.4"><rect x="0" y="0" width="12.4" height="12.4" rx="2.5" fill="#17706d"/><path d="M2.7 6.2 L5.2 8.9 L9.9 3.5" fill="none" stroke="#fff" stroke-width="1.8"/></svg><svg style="position:absolute;left:31.00px;top:302.43px;" width="10" height="13" viewBox="0 0 10 13"><path d="M0.5 0.5 H6.5 L9.5 3.5 V12.5 H0.5 Z" fill="#fff" stroke="#9a9ea3" stroke-width="0.9"/><path d="M6.5 0.5 V3.5 H9.5" fill="none" stroke="#9a9ea3" stroke-width="0.8"/><path d="M3 7.3 H7 M3 9.3 H7" stroke="#9a9ea3" stroke-width="0.75"/></svg><div class="t" style="left:55.20px;top:303.23px;font-size:9.5px;line-height:11.40px;color:#1f2327;font-weight:400;">MRI Safety Information</div><div class="t" style="left:308.10px;top:303.23px;font-size:9.5px;line-height:11.40px;color:#1f2327;font-weight:400;">2</div><div class="t" style="left:434.20px;top:303.23px;font-size:9.5px;line-height:11.40px;color:#1f2327;font-weight:400;">Draft</div><div class="t" style="left:561.10px;top:303.23px;font-size:9.5px;line-height:11.40px;color:#1f2327;font-weight:400;">11/21/2023 5:05:47 PM</div><div class="t" style="left:750.40px;top:303.23px;font-size:9.5px;line-height:11.40px;color:#1f2327;font-weight:400;">Frank Gerardi</div><div style="position:absolute;left:0.00px;top:352.90px;width:871.20px;height:1.00px;background:#e3e5e8"></div><svg style="position:absolute;left:5.80px;top:332.18px;" width="12.4" height="12.4" viewBox="0 0 12.4 12.4"><rect x="0.5" y="0.5" width="11.4" height="11.4" rx="2.5" fill="#fff" stroke="#8e9297" stroke-width="1"/></svg><svg style="position:absolute;left:31.00px;top:331.88px;" width="10" height="13" viewBox="0 0 10 13"><path d="M0.5 0.5 H6.5 L9.5 3.5 V12.5 H0.5 Z" fill="#fff" stroke="#9a9ea3" stroke-width="0.9"/><path d="M6.5 0.5 V3.5 H9.5" fill="none" stroke="#9a9ea3" stroke-width="0.8"/><path d="M3 7.3 H7 M3 9.3 H7" stroke="#9a9ea3" stroke-width="0.75"/></svg><div class="t" style="left:55.20px;top:332.68px;font-size:9.5px;line-height:11.40px;color:#1f2327;font-weight:400;">Non-Programmable Parameters</div><div class="t" style="left:308.10px;top:332.68px;font-size:9.5px;line-height:11.40px;color:#1f2327;font-weight:400;">1</div><div class="t" style="left:434.20px;top:332.68px;font-size:9.5px;line-height:11.40px;color:#1f2327;font-weight:400;">Released</div><div class="t" style="left:561.10px;top:332.68px;font-size:9.5px;line-height:11.40px;color:#1f2327;font-weight:400;">11/21/2023 5:05:47 PM</div><div style="position:absolute;left:0.00px;top:382.35px;width:871.20px;height:1.00px;background:#e3e5e8"></div><svg style="position:absolute;left:5.80px;top:361.62px;" width="12.4" height="12.4" viewBox="0 0 12.4 12.4"><rect x="0.5" y="0.5" width="11.4" height="11.4" rx="2.5" fill="#fff" stroke="#8e9297" stroke-width="1"/></svg><svg style="position:absolute;left:31.00px;top:361.32px;" width="10" height="13" viewBox="0 0 10 13"><path d="M0.5 0.5 H6.5 L9.5 3.5 V12.5 H0.5 Z" fill="#fff" stroke="#9a9ea3" stroke-width="0.9"/><path d="M6.5 0.5 V3.5 H9.5" fill="none" stroke="#9a9ea3" stroke-width="0.8"/><path d="M3 7.3 H7 M3 9.3 H7" stroke="#9a9ea3" stroke-width="0.75"/></svg><div class="t" style="left:55.20px;top:362.12px;font-size:9.5px;line-height:11.40px;color:#1f2327;font-weight:400;">Pacemaker Electrodes</div><div class="t" style="left:308.10px;top:362.12px;font-size:9.5px;line-height:11.40px;color:#1f2327;font-weight:400;">1</div><div class="t" style="left:434.20px;top:362.12px;font-size:9.5px;line-height:11.40px;color:#1f2327;font-weight:400;">Released</div><div class="t" style="left:561.10px;top:362.12px;font-size:9.5px;line-height:11.40px;color:#1f2327;font-weight:400;">11/21/2023 5:05:47 PM</div><div style="position:absolute;left:0.00px;top:411.80px;width:871.20px;height:1.00px;background:#e3e5e8"></div><svg style="position:absolute;left:5.80px;top:391.07px;" width="12.4" height="12.4" viewBox="0 0 12.4 12.4"><rect x="0.5" y="0.5" width="11.4" height="11.4" rx="2.5" fill="#fff" stroke="#8e9297" stroke-width="1"/></svg><svg style="position:absolute;left:31.00px;top:390.77px;" width="10" height="13" viewBox="0 0 10 13"><path d="M0.5 0.5 H6.5 L9.5 3.5 V12.5 H0.5 Z" fill="#fff" stroke="#9a9ea3" stroke-width="0.9"/><path d="M6.5 0.5 V3.5 H9.5" fill="none" stroke="#9a9ea3" stroke-width="0.8"/><path d="M3 7.3 H7 M3 9.3 H7" stroke="#9a9ea3" stroke-width="0.75"/></svg><div class="t" style="left:55.20px;top:391.57px;font-size:9.5px;line-height:11.40px;color:#1f2327;font-weight:400;">Pacemaker Power Source Information</div><div class="t" style="left:308.10px;top:391.57px;font-size:9.5px;line-height:11.40px;color:#1f2327;font-weight:400;">1</div><div class="t" style="left:434.20px;top:391.57px;font-size:9.5px;line-height:11.40px;color:#1f2327;font-weight:400;">Released</div><div class="t" style="left:561.10px;top:391.57px;font-size:9.5px;line-height:11.40px;color:#1f2327;font-weight:400;">11/21/2023 5:05:47 PM</div><svg style="position:absolute;left:5.80px;top:420.53px;" width="12.4" height="12.4" viewBox="0 0 12.4 12.4"><rect x="0.5" y="0.5" width="11.4" height="11.4" rx="2.5" fill="#fff" stroke="#8e9297" stroke-width="1"/></svg><svg style="position:absolute;left:31.00px;top:420.23px;" width="10" height="13" viewBox="0 0 10 13"><path d="M0.5 0.5 H6.5 L9.5 3.5 V12.5 H0.5 Z" fill="#fff" stroke="#9a9ea3" stroke-width="0.9"/><path d="M6.5 0.5 V3.5 H9.5" fill="none" stroke="#9a9ea3" stroke-width="0.8"/><path d="M3 7.3 H7 M3 9.3 H7" stroke="#9a9ea3" stroke-width="0.75"/></svg><div class="t" style="left:55.20px;top:421.03px;font-size:9.5px;line-height:11.40px;color:#1f2327;font-weight:400;">Patient Information</div><div class="t" style="left:308.10px;top:421.03px;font-size:9.5px;line-height:11.40px;color:#1f2327;font-weight:400;">1</div><div class="t" style="left:434.20px;top:421.03px;font-size:9.5px;line-height:11.40px;color:#1f2327;font-weight:400;">Released</div><div class="t" style="left:561.10px;top:421.03px;font-size:9.5px;line-height:11.40px;color:#1f2327;font-weight:400;">11/21/2023 5:05:47 PM</div></div><div style="position:absolute;left:1120.80px;top:449.80px;width:5.20px;height:420.50px;background:#e3e4e7;border-radius:3px"></div><div style="position:absolute;left:1120.80px;top:588.40px;width:5.20px;height:65.60px;background:#9d9fa3;border-radius:3px"></div><div style="position:absolute;left:1145.50px;top:302.00px;width:243.50px;height:582.00px;background:#fff"></div><div style="position:absolute;left:1145.50px;top:302.00px;width:0.80px;height:582.00px;background:#e3e5e8"></div><svg style="position:absolute;left:1164.50px;top:324.70px;" width="10" height="13" viewBox="0 0 10 13"><path d="M0.5 0.5 H6.5 L9.5 3.5 V12.5 H0.5 Z" fill="#fff" stroke="#8a8e93" stroke-width="0.9"/><path d="M6.5 0.5 V3.5 H9.5" fill="none" stroke="#8a8e93" stroke-width="0.8"/><path d="M3 7.3 H7 M3 9.3 H7" stroke="#8a8e93" stroke-width="0.75"/></svg><div style="position:absolute;left:1181.4px;top:321.5px;width:171px;height:20px;overflow:hidden;-webkit-mask-image:linear-gradient(90deg,#000 90%,rgba(0,0,0,0.2));mask-image:linear-gradient(90deg,#000 90%,rgba(0,0,0,0.2))"><div class="t" style="left:0;top:0;font-size:14.5px;line-height:19px;color:#25292d;transform:scaleX(0.93);transform-origin:0 50%">Indications for Use v.2 - en-US</div></div><svg style="position:absolute;left:1365.50px;top:326.50px;" width="11" height="11" viewBox="0 0 11 11"><path d="M0.8 0.8 L10.2 10.2 M10.2 0.8 L0.8 10.2" stroke="#55595e" stroke-width="1.4"/></svg><div style="position:absolute;left:1146.30px;top:359.00px;width:242.20px;height:1.00px;background:#e6e8ea"></div><div class="t" style="left:1163.80px;top:379.78px;font-size:14.2px;line-height:17.04px;color:#6b7076;font-weight:400;transform:scaleX(0.915);transform-origin:0 50%;">Properties</div><div style="position:absolute;left:1307.00px;top:377.40px;width:29.20px;height:21.20px;background:#7fb9b6;border-radius:3px"></div><svg style="position:absolute;left:1315.50px;top:381.80px;" width="12" height="12.5" viewBox="0 0 12 12.5"><path d="M0.7 0.7 H9 L11.3 3 V11.8 H0.7 Z" fill="#6aa8a5" stroke="#eef8f7" stroke-width="1.3"/><path d="M3 0.7 V3.5 H8 V0.7" fill="none" stroke="#eef8f7" stroke-width="1.1"/><rect x="3.6" y="6.2" width="4.8" height="3.8" fill="none" stroke="#eef8f7" stroke-width="1"/></svg><div style="position:absolute;left:1342.80px;top:377.40px;width:28.20px;height:21.20px;background:#f1f2f3;border-radius:3px"></div><svg style="position:absolute;left:1350.50px;top:381.50px;" width="13" height="13" viewBox="0 0 13 13"><path d="M2.6 4.25 A4.5 4.5 0 1 1 2.6 8.75" fill="none" stroke="#c3c6ca" stroke-width="1"/><path d="M1.6 1.2 L2.4 4.5 L5.6 3.7" fill="none" stroke="#c3c6ca" stroke-width="1"/></svg><div style="position:absolute;left:1163.80px;top:431.00px;width:60.50px;height:0.80px;background:#e2e4e7"></div><div class="t" style="left:1237.20px;top:426.12px;font-size:9.3px;line-height:11.16px;color:#26292c;font-weight:700;letter-spacing:-0.15px">Show optional fields</div><div style="position:absolute;left:1342.20px;top:423.00px;width:29.70px;height:14.70px;background:#177370;border-radius:8px"></div><div style="position:absolute;left:1358.4px;top:424.1px;width:12.6px;height:12.6px;border-radius:50%;background:#fff;box-shadow:0 0 1px rgba(0,0,0,.3)"></div><div class="t" style="left:1167.20px;top:448.48px;font-size:9.7px;line-height:11.64px;color:#2b2f33;font-weight:400;">All</div><svg style="position:absolute;left:1355.50px;top:452.50px;" width="9" height="5" viewBox="0 0 9 5"><path d="M0 0 H9 L4.5 5 Z" fill="#6d7176"/></svg><div style="position:absolute;left:1167.00px;top:466.20px;width:202.00px;height:1.80px;background:#177370"></div><div class="t" style="left:1168.40px;top:479.50px;font-size:10.5px;line-height:12.60px;color:#1f2327;font-weight:400;">General</div><div style="position:absolute;left:1167.00px;top:498.20px;width:193.00px;height:0.80px;background:#e8eaec"></div><div style="position:absolute;left:1362.60px;top:474.00px;width:6.40px;height:396.00px;background:#ececee;border-radius:3px"></div><div style="position:absolute;left:1362.60px;top:474.00px;width:6.40px;height:90.00px;background:#a3a5a8;border-radius:3px"></div><div class="t" style="left:1168.40px;top:510.72px;font-size:9.3px;line-height:11.16px;color:#26292c;font-weight:700;">Title <span style="color:#d0342c">*</span></div><div style="position:absolute;left:1168.40px;top:527.50px;width:192.20px;height:21.80px;box-sizing:border-box;border:1px solid #8e9297;border-radius:3px;background:#fff"></div><div class="t" style="left:1177.00px;top:532.82px;font-size:9.3px;line-height:11.16px;color:#1f2327;font-weight:400;">Indications for Use</div><div class="t" style="left:1168.40px;top:567.88px;font-size:7.2px;line-height:8.64px;color:#55595e;font-weight:400;letter-spacing:0.3px">GENERAL</div><div class="t" style="left:1168.40px;top:589.82px;font-size:9.3px;line-height:11.16px;color:#26292c;font-weight:700;">In folder</div><div style="position:absolute;left:1168.40px;top:606.50px;width:192.20px;height:20.80px;box-sizing:border-box;border:1px solid #9a9ea3;border-radius:3px;background:#f1f1f2"></div><div class="t" style="left:1177px;top:610.9px;font-size:9.3px;line-height:12px;color:#b4b7bb;width:177px;overflow:hidden">General\RWS Demos\05. Life Sciences\Med Device</div><div class="t" style="left:1168.40px;top:642.82px;font-size:9.3px;line-height:11.16px;color:#26292c;font-weight:700;">Identifier <span style="color:#d0342c">*</span></div><div style="position:absolute;left:1168.40px;top:659.40px;width:192.20px;height:21.80px;box-sizing:border-box;border:1px solid #9a9ea3;border-radius:3px;background:#f1f1f2"></div><div class="t" style="left:1177px;top:664.3px;font-size:9.3px;line-height:12px;color:#b4b7bb;width:177px;overflow:hidden">GUID-45996300-3E08-48A9-865E-4A7967C</div><div class="t" style="left:1168.40px;top:696.32px;font-size:9.3px;line-height:11.16px;color:#26292c;font-weight:700;">Topic type</div><div style="position:absolute;left:1168.40px;top:712.50px;width:192.20px;height:21.80px;box-sizing:border-box;border:1px solid #8e9297;border-radius:3px;background:#fff"></div><div class="t" style="left:1175.00px;top:718.30px;font-size:9.5px;line-height:11.40px;color:#1f2327;font-weight:400;">(None)</div><svg style="position:absolute;left:1343.50px;top:721.50px;" width="8" height="5" viewBox="0 0 8 5"><path d="M0 0 H8 L4 4.5 Z" fill="#5d6570"/></svg><div class="t" style="left:1168.40px;top:750.12px;font-size:9.3px;line-height:11.16px;color:#26292c;font-weight:700;">Description</div><div style="position:absolute;left:1168.40px;top:765.30px;width:192.20px;height:53.90px;box-sizing:border-box;border:1px solid #8e9297;border-radius:3px;background:#fff"></div><div class="t" style="left:1168.40px;top:833.32px;font-size:9.3px;line-height:11.16px;color:#26292c;font-weight:700;">Goals</div><div style="position:absolute;left:1168.4px;top:849.9px;width:192.2px;height:20px;overflow:hidden"><div style="position:absolute;left:0;top:0;width:192.2px;height:22px;box-sizing:border-box;border:1px solid #8e9297;border-radius:3px;background:#fff"></div></div><div class="t" style="left:1177.00px;top:854.42px;font-size:9.3px;line-height:11.16px;color:#b9bcc0;font-weight:400;">Type to find tags</div><svg style="position:absolute;left:1345.00px;top:856.50px;" width="7" height="8" viewBox="0 0 7 8"><path d="M0.5 3.3 L3.5 0.3 L6.5 3.3 Z M0.5 4.7 L3.5 7.7 L6.5 4.7 Z" fill="#5d6570"/></svg><div style="position:absolute;left:1389.00px;top:302.00px;width:38.50px;height:582.00px;background:#fff"></div><div style="position:absolute;left:1389.00px;top:302.00px;width:0.80px;height:582.00px;background:#e3e5e8"></div><div style="position:absolute;left:1389.00px;top:331.20px;width:1.00px;height:9.40px;background:#fff"></div><svg style="position:absolute;left:1389.00px;top:331.00px;" width="5" height="10" viewBox="0 0 5 10"><path d="M0.4 0.2 L4.3 4.9 L0.4 9.6" fill="#fff" stroke="#e3e5e8" stroke-width="0.8"/></svg><svg style="position:absolute;left:1401.00px;top:328.00px;" width="13" height="13" viewBox="0 0 13 13"><circle cx="6.5" cy="6.5" r="5.8" fill="none" stroke="#177370" stroke-width="1.1"/><path d="M6.5 5.5 V10 M5.2 10 H7.8 M5.2 5.5 H6.5" stroke="#177370" stroke-width="1.1"/><circle cx="6.5" cy="3.6" r="0.8" fill="#177370"/></svg><svg style="position:absolute;left:1401.00px;top:365.50px;" width="13" height="13" viewBox="0 0 13 13"><circle cx="6.5" cy="6.5" r="5.8" fill="none" stroke="#6d7176" stroke-width="1"/><path d="M6.5 3 V6.8 L8.8 8.5" fill="none" stroke="#6d7176" stroke-width="1"/></svg><svg style="position:absolute;left:1401.00px;top:403.00px;" width="13" height="12" viewBox="0 0 13 12"><circle cx="3.3" cy="8.3" r="2.8" fill="none" stroke="#6d7176" stroke-width="1"/><circle cx="9.7" cy="8.3" r="2.8" fill="none" stroke="#6d7176" stroke-width="1"/><path d="M1.5 6 L3.5 1.5 H5.5 L6.5 5 L7.5 1.5 H9.5 L11.5 6" fill="none" stroke="#6d7176" stroke-width="1"/></svg><div style="position:absolute;left:10.50px;top:884.00px;width:1417.00px;height:27.00px;background:#fff"></div><div style="position:absolute;left:10.50px;top:883.80px;width:1417.00px;height:0.80px;background:#eceef0"></div><svg style="position:absolute;left:20.90px;top:893.30px;" width="12" height="10" viewBox="0 0 12 10"><path d="M0 1 Q0 0 1 0 L4.5 0 L5.5 1.5 L11 1.5 Q12 1.5 12 2.5 L12 9 Q12 10 11 10 L1 10 Q0 10 0 9 Z" fill="#2a9d8f"/><rect x="0" y="2.6" width="12" height="0.6" fill="#fff" opacity="0.35"/></svg><div class="t" style="left:38.80px;top:892.72px;font-size:9.3px;line-height:11.16px;color:#1f2327;font-weight:400;">General</div><svg style="position:absolute;left:83.50px;top:893.80px;" width="6" height="9" viewBox="0 0 6 9"><path d="M1 0.8 L4.8 4.5 L1 8.2" fill="none" stroke="#77797d" stroke-width="1"/></svg><svg style="position:absolute;left:101.00px;top:893.30px;" width="12" height="10" viewBox="0 0 12 10"><path d="M0 1 Q0 0 1 0 L4.5 0 L5.5 1.5 L11 1.5 Q12 1.5 12 2.5 L12 9 Q12 10 11 10 L1 10 Q0 10 0 9 Z" fill="#f5b53b"/><rect x="0" y="2.6" width="12" height="0.6" fill="#fff" opacity="0.35"/></svg><div class="t" style="left:119.60px;top:892.72px;font-size:9.3px;line-height:11.16px;color:#1f2327;font-weight:400;">RWS Demos</div><svg style="position:absolute;left:182.00px;top:893.80px;" width="6" height="9" viewBox="0 0 6 9"><path d="M1 0.8 L4.8 4.5 L1 8.2" fill="none" stroke="#77797d" stroke-width="1"/></svg><svg style="position:absolute;left:199.30px;top:893.30px;" width="12" height="10" viewBox="0 0 12 10"><path d="M0 1 Q0 0 1 0 L4.5 0 L5.5 1.5 L11 1.5 Q12 1.5 12 2.5 L12 9 Q12 10 11 10 L1 10 Q0 10 0 9 Z" fill="#f5b53b"/><rect x="0" y="2.6" width="12" height="0.6" fill="#fff" opacity="0.35"/></svg><div class="t" style="left:217.10px;top:892.72px;font-size:9.3px;line-height:11.16px;color:#1f2327;font-weight:400;">05. Life Sciences</div><svg style="position:absolute;left:297.30px;top:893.80px;" width="6" height="9" viewBox="0 0 6 9"><path d="M1 0.8 L4.8 4.5 L1 8.2" fill="none" stroke="#77797d" stroke-width="1"/></svg><svg style="position:absolute;left:314.00px;top:893.30px;" width="12" height="10" viewBox="0 0 12 10"><path d="M0 1 Q0 0 1 0 L4.5 0 L5.5 1.5 L11 1.5 Q12 1.5 12 2.5 L12 9 Q12 10 11 10 L1 10 Q0 10 0 9 Z" fill="#f5b53b"/><rect x="0" y="2.6" width="12" height="0.6" fill="#fff" opacity="0.35"/></svg><div class="t" style="left:332.50px;top:892.72px;font-size:9.3px;line-height:11.16px;color:#1f2327;font-weight:400;">Med Device</div><svg style="position:absolute;left:393.30px;top:893.80px;" width="6" height="9" viewBox="0 0 6 9"><path d="M1 0.8 L4.8 4.5 L1 8.2" fill="none" stroke="#77797d" stroke-width="1"/></svg><div style="position:absolute;left:406.70px;top:887.00px;width:54.30px;height:22.00px;background:#e3eef1;border-radius:2px"></div><svg style="position:absolute;left:411.50px;top:891.80px;" width="12" height="12.5" viewBox="0 0 12 12.5"><path d="M0 3 L3 3 L3 4.5 L0 4.5 Z M0 5.5 L12 5.5 L12 12 L0 12 Z" fill="#f5b53b"/><path d="M0 1 L3 1 L3 2.2 L0 2.2Z" fill="#f5b53b"/><path d="M4.5 0.5 L9.5 0.5 L11.5 2.5 L11.5 9.5 L4.5 9.5 Z" fill="#eef0f6" stroke="#8c90a8" stroke-width="0.8"/><path d="M6 4.5 H10 M6 6.3 H10 M6 8 H10" stroke="#8c90a8" stroke-width="0.6"/></svg><div class="t" style="left:430.00px;top:892.72px;font-size:9.3px;line-height:11.16px;color:#1f2327;font-weight:400;">Topics</div><div style="position:absolute;left:10.00px;top:234.00px;width:1418.00px;height:677.50px;box-sizing:border-box;border:1.5px solid #3a3868;border-right:2px solid #8d87b6;border-bottom:1.8px solid #8d88b3;background:transparent"></div>
</body></html>
